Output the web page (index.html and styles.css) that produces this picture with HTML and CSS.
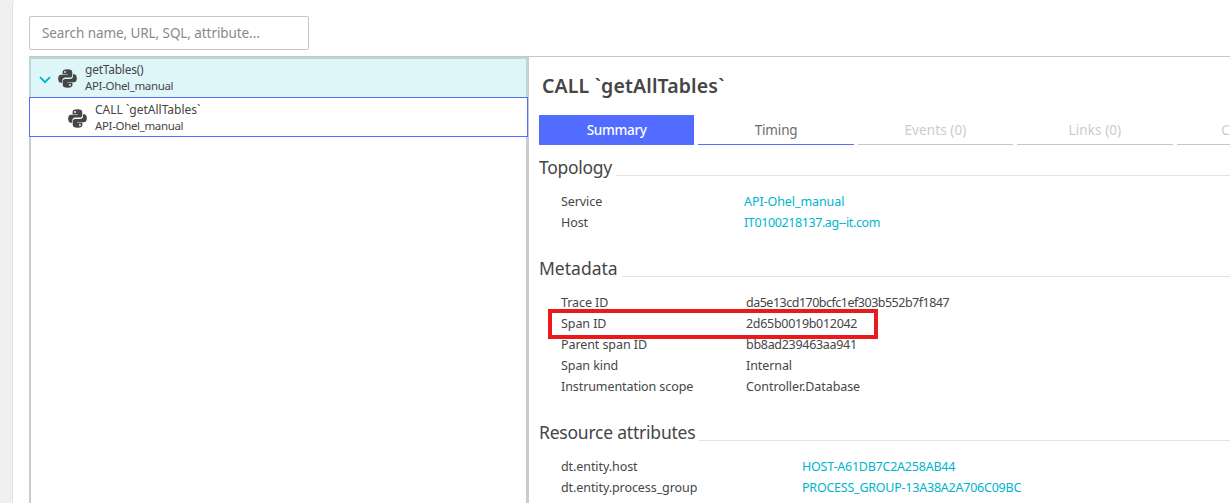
FILE: index.html
```
<!DOCTYPE html>
<html lang="en">
<head>
<meta charset="utf-8">
<title>Trace details</title>
<link rel="stylesheet" href="styles.css">
</head>
<body>
<svg class="defs" width="0" height="0">
  <symbol id="python" viewBox="0 0 24 24">
    <path fill-rule="evenodd" d="M12 .3c-4.500 0-6.200 1.300-6.200 3.500v2.700h6.500v.8H3.800C1.200 7.300.200 9.500.200 12.300s1.200 5.100 3.300 5.100h1.900v-2.700c0-2.200 1.500-3.900 3.700-3.900h5.800c1.900 0 3.100-1.200 3.100-3V3.800C18 1.600 16 .3 12 .3zM8.900 2.500a1.200 1.200 0 1 1 0 2.400 1.200 1.200 0 0 1 0-2.400z"/>
    <path fill-rule="evenodd" d="M12 23.700c4.500 0 6.200-1.300 6.200-3.500v-2.700h-6.500v-.8h8.500c2.600 0 3.600-2.200 3.600-5s-1.200-5.100-3.300-5.100h-1.600v2.700c0 2.200-1.500 3.400-3.700 3.400H9.100c-1.900 0-3.100 1.200-3.100 3v4.500c0 2.200 2 3.500 6 3.500zm3.100-2.200a1.200 1.200 0 1 1 0-2.400 1.200 1.200 0 0 1 0 2.400z"/>
  </symbol>
</svg>
<main class="card">
  <div class="search"><span>Search name, URL, SQL, attribute...</span></div>
  <div class="split">
    <div class="tree">
      <div class="node root">
        <svg class="chevron" viewBox="0 0 12 8"><path d="M1 1.200l5 5 5-5"/></svg>
        <svg class="python"><use href="#python"/></svg>
        <div class="label"><span class="fn">getTables()</span><span class="svc">API-Ohel_manual</span></div>
      </div>
      <div class="node child">
        <svg class="python"><use href="#python"/></svg>
        <div class="label"><span class="call">CALL `getAllTables`</span><span class="svc">API-Ohel_manual</span></div>
      </div>
    </div>
    <div class="detail">
      <h1>CALL `getAllTables`</h1>
      <nav class="tabs">
        <div class="tab active">Summary</div>
        <div class="tab timing">Timing</div>
        <div class="tab off">Events (0)</div>
        <div class="tab off">Links (0)</div>
        <div class="tab off">Code level</div>
      </nav>
      <section class="topology">
        <h2><span>Topology</span></h2>
        <dl>
          <dt>Service</dt><dd class="link">API-Ohel_manual</dd>
          <dt>Host</dt><dd class="link host">IT0100218137.ag--it.com</dd>
        </dl>
      </section>
      <section class="metadata">
        <h2><span>Metadata</span></h2>
        <dl>
          <dt>Trace ID</dt><dd class="trace">da5e13cd170bcfc1ef303b552b7f1847</dd>
          <dt class="marked">Span ID</dt><dd class="span">2d65b0019b012042</dd>
          <dt>Parent span ID</dt><dd class="parent">bb8ad239463aa941</dd>
          <dt>Span kind</dt><dd>Internal</dd>
          <dt>Instrumentation scope</dt><dd>Controller.Database</dd>
        </dl>
      </section>
      <section class="resources">
        <h2><span>Resource attributes</span></h2>
        <dl>
          <dt>dt.entity.host</dt><dd class="link hostid">HOST-A61DB7C2A258AB44</dd>
          <dt>dt.entity.process_group</dt><dd class="link group">PROCESS_GROUP-13A38A2A706C09BC</dd>
        </dl>
      </section>
    </div>
  </div>
</main>
</body>
</html>
```
FILE: styles.css
```
*, *::after { box-sizing: border-box; }
html, body { margin: 0; height: 503px; overflow: hidden; }
body {
  background: #f0f0f0;
  color: #454646;
  font-family: "Noto Sans", "Open Sans", sans-serif;
  padding-left: 12px;
}
.defs { position: absolute; }
.card {
  height: 520px;
  background: #fff;
  border-left: 1px solid #e2e2e2;
  border-top-left-radius: 4px;
  padding: 16px 0 0 16px;
}
.search {
  width: 280px;
  height: 34px;
  border: 1px solid #c7c7c7;
  border-radius: 2px;
  padding-left: 12px;
  font-size: 13.5px;
  line-height: 32px;
  letter-spacing: -0.08px;
  color: #898989;
  white-space: nowrap;
}
.split {
  display: flex;
  height: 470px;
  margin-top: 6px;
  border-top: 1px solid #c7c7c7;
}
.tree {
  width: 500px;
  flex: none;
  background: linear-gradient(#ccc, #ccc) left / 2px 100% no-repeat,
    linear-gradient(#ccc, #ccc) right / 3px 100% no-repeat;
}
.node { display: flex; align-items: center; }
.root {
  width: 499px;
  height: 40px;
  background: #dff6f8;
  border: 2px solid #bfd6d8;
  border-bottom: 0;
  padding-left: 9px;
}
.child {
  width: 499px;
  height: 40px;
  background: #fff;
  border: 1px solid #526cff;
  padding-left: 38px;
}
.chevron {
  width: 12px;
  height: 8px;
  margin: 3px 6px 0 -1px;
  fill: none;
  stroke: #00b4cc;
  stroke-width: 1.8;
}
.python { width: 19px; height: 19px; fill: #454646; margin-top: 1px; }
.root .python { margin-left: 1px; }
.child .python { margin-top: 2px; }
.label {
  display: flex;
  flex-direction: column;
  margin-left: 8px;
  font-size: 12px;
  line-height: 16px;
  white-space: nowrap;
}
.child .label { padding-top: 1px; }
.label .svc { font-size: 11.5px; letter-spacing: -0.35px; }
.fn { letter-spacing: -0.25px; }
.call { letter-spacing: 0; }
.detail { flex: 1; min-width: 0; overflow: hidden; padding-left: 10px; }
h1 {
  margin: 16px 0 0 3px;
  font-size: 19.5px;
  line-height: 26px;
  font-weight: 600;
  letter-spacing: 0.12px;
  white-space: nowrap;
}
.tabs {
  display: grid;
  grid-template-columns: repeat(5, 155.400px);
  gap: 4px;
  margin-top: 16px;
  font-size: 13.5px;
  line-height: 30px;
  text-align: center;
}
.tab { height: 30px; border-bottom: 1px solid #c7c7c7; color: #ccc; }
.tab.off { letter-spacing: 0.1px; }
.tab.active { background: #526cff; border-color: #526cff; color: #fff; font-weight: 500; letter-spacing: -0.3px; }
.tab.timing { border-color: #526cff; color: #6d6d6d; letter-spacing: -0.15px; }
h2 {
  display: flex;
  align-items: flex-end;
  margin: 0;
  height: 31px;
  padding-top: 11px;
  font-size: 17.5px;
  font-weight: 400;
  line-height: 24px;
  white-space: nowrap;
}
h2::after { content: ""; flex: 1; height: 1px; margin-left: 4px; background: #e2e2e2; }
h2 span { height: 21px; margin-top: -4px; }
dl {
  display: grid;
  grid-template-columns: 183px 1fr;
  grid-auto-rows: 21px;
  margin: 15px 0 0 22px;
  font-size: 12.5px;
  line-height: 21px;
  letter-spacing: -0.08px;
  white-space: nowrap;
}
dt, dd { margin: 0; }
.link { color: #00b4cc; }
.topology h2 { letter-spacing: -0.3px; }
.metadata { margin-top: 13px; }
.metadata dl { grid-template-columns: 185px 1fr; }
.resources { margin-top: 13px; }
.resources h2 { letter-spacing: -0.22px; }
.resources dl { grid-template-columns: 241px 1fr; }
.host { letter-spacing: -0.4px; }
.trace { letter-spacing: -0.5px; }
.span, .parent { letter-spacing: -0.3px; }
.hostid, .group { letter-spacing: -0.23px; }
.marked { position: relative; }
.marked::after {
  content: "";
  position: absolute;
  left: -13px;
  top: -4px;
  width: 330px;
  height: 30px;
  border: 4px solid #e81a1c;
}
```
